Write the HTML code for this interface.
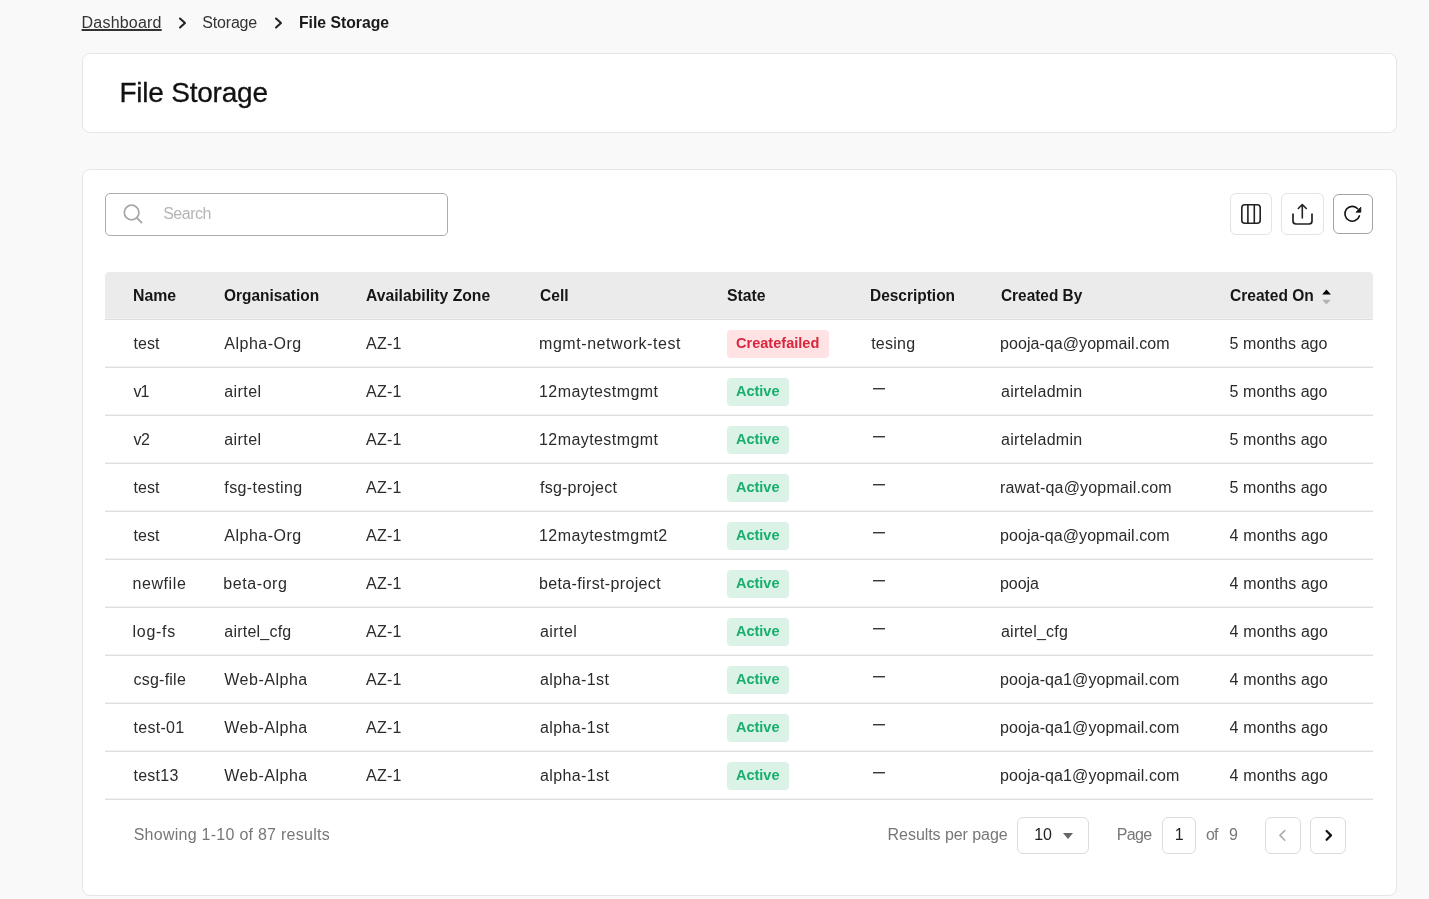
<!DOCTYPE html><html><head><meta charset="utf-8"><style>
*{margin:0;padding:0;box-sizing:border-box}
body{will-change:transform}
html,body{width:1429px;height:899px;overflow:hidden;background:#f9f9f9;font-family:"Liberation Sans",sans-serif;position:relative}
.a{position:absolute;white-space:nowrap}
.t{font-size:16px;line-height:20px;color:#2b2b2b}
.h{font-size:16.5px;line-height:20px;color:#161616;font-weight:bold}
.card{position:absolute;background:#fff;border:1px solid #e6e6e6;border-radius:8px}
.btn{position:absolute;background:#fff;border:1px solid #e3e3e3;border-radius:6px}
.badge{position:absolute;height:27.5px;border-radius:4px}
.bt{font-weight:bold;font-size:15.3px;line-height:20px}
.red{background:#ffe2e3}
.green{background:#dbf2e7}
.line{position:absolute;left:105px;width:1268px;height:1px;background:#dedede;box-shadow:0 -1px 0 #f1f1f1}
.dash{position:absolute;width:12px;height:1px;background:#3a3a3a;box-shadow:0 1px 0 rgba(60,60,60,0.45)}
</style></head><body>
<div class="a t" style="left:81.60px;top:13.00px;letter-spacing:0.203px;color:#333;text-decoration:underline;text-underline-offset:1px;text-decoration-thickness:1.5px">Dashboard</div>
<svg class="a" style="left:177px;top:16px" width="12" height="14" viewBox="0 0 12 14"><path d="M3 2.5 L8 7 L3 11.5" fill="none" stroke="#222" stroke-width="2" stroke-linecap="round" stroke-linejoin="round"/></svg>
<div class="a t" style="left:202.30px;top:13.00px;letter-spacing:-0.190px;color:#333">Storage</div>
<svg class="a" style="left:273px;top:16px" width="12" height="14" viewBox="0 0 12 14"><path d="M3 2.5 L8 7 L3 11.5" fill="none" stroke="#222" stroke-width="2" stroke-linecap="round" stroke-linejoin="round"/></svg>
<div class="a h" style="left:298.75px;top:12.00px;transform:scaleX(0.9543);transform-origin:0 0;color:#1a1a1a">File Storage</div>
<div class="card" style="left:82px;top:53px;width:1315px;height:80px"></div>
<div class="a a" style="left:119.40px;top:77.00px;letter-spacing:-0.218px;font-size:28px;line-height:32px;color:#111;-webkit-text-stroke:0.3px #111">File Storage</div>
<div class="card" style="left:82px;top:169px;width:1315px;height:727px"></div>
<div class="a" style="left:105px;top:193px;width:343px;height:43px;border:1px solid #ababab;border-radius:5px;background:#fff"></div>
<svg class="a" style="left:118px;top:200px" width="28" height="28" viewBox="0 0 28 28"><circle cx="13.6" cy="12.5" r="7.3" fill="none" stroke="#a8a8a8" stroke-width="1.8"/><path d="M19 18 L23.5 22.5" stroke="#a8a8a8" stroke-width="1.8" stroke-linecap="round"/></svg>
<div class="a t" style="left:163.20px;top:204.00px;letter-spacing:-0.499px;color:#b5b5b5">Search</div>
<div class="btn" style="left:1230px;top:193px;width:42px;height:42px"></div>
<svg class="a" style="left:1230px;top:193px" width="43" height="43" viewBox="0 0 43 43"><rect x="11.8" y="11.8" width="18.4" height="18.4" rx="3" fill="none" stroke="#222" stroke-width="1.6"/><path d="M17.9 11.8 V30.2 M24.3 11.8 V30.2" stroke="#222" stroke-width="1.6"/></svg>
<div class="btn" style="left:1281px;top:193px;width:43px;height:42px"></div>
<svg class="a" style="left:1281px;top:193px" width="43" height="43" viewBox="0 0 43 43"><path d="M12 21 V28 Q12 31 15 31 H28 Q31 31 31 28 V21" fill="none" stroke="#222" stroke-width="1.7" stroke-linecap="round"/><path d="M21.3 25 V11.5 M17.3 15.5 L21.3 11.5 L25.3 15.5" fill="none" stroke="#222" stroke-width="1.6" stroke-linecap="round" stroke-linejoin="round"/></svg>
<div class="btn" style="left:1333px;top:194px;width:40px;height:40px;border-color:#a3a3a3"></div>
<svg class="a" style="left:1333px;top:194px" width="40" height="40" viewBox="0 0 40 40"><path d="M24.71 14.70 A7.4 7.4 0 1 0 26.38 21.91" fill="none" stroke="#111" stroke-width="1.6" stroke-linecap="round"/><path d="M27.8 13.2 V18.2 H23 Z" fill="#111" stroke="#111" stroke-width="0.8" stroke-linejoin="round"/></svg>
<div class="a" style="left:105px;top:272px;width:1268px;height:47px;background:#ebebeb;border-radius:4px 4px 0 0"></div>
<div class="line" style="top:319px"></div>
<div class="a h" style="left:132.54px;top:284.50px;transform:scaleX(0.9597);transform-origin:0 0;">Name</div>
<div class="a h" style="left:224.30px;top:284.50px;transform:scaleX(0.9343);transform-origin:0 0;">Organisation</div>
<div class="a h" style="left:366.00px;top:284.50px;transform:scaleX(0.9515);transform-origin:0 0;">Availability Zone</div>
<div class="a h" style="left:540.00px;top:284.50px;transform:scaleX(0.9435);transform-origin:0 0;">Cell</div>
<div class="a h" style="left:727.00px;top:284.50px;transform:scaleX(0.9584);transform-origin:0 0;">State</div>
<div class="a h" style="left:870.26px;top:284.50px;transform:scaleX(0.9366);transform-origin:0 0;">Description</div>
<div class="a h" style="left:1001.00px;top:284.50px;transform:scaleX(0.9325);transform-origin:0 0;">Created By</div>
<div class="a h" style="left:1229.60px;top:284.50px;transform:scaleX(0.9431);transform-origin:0 0;">Created On</div>
<svg class="a" style="left:1320px;top:287px" width="13" height="20" viewBox="0 0 13 20"><path d="M2.2 7.6 L6.4 2.5 L10.9 7.6 Z" fill="#000"/><path d="M2.2 12.8 L6.4 17.6 L10.9 12.8 Z" fill="#b3b3b3"/></svg>
<div class="a t" style="left:133.50px;top:334.00px;letter-spacing:0.019px;">test</div>
<div class="a t" style="left:224.30px;top:334.00px;letter-spacing:0.497px;">Alpha-Org</div>
<div class="a t" style="left:366.00px;top:334.00px;letter-spacing:0.242px;">AZ-1</div>
<div class="a t" style="left:539.00px;top:334.00px;letter-spacing:0.561px;">mgmt-network-test</div>
<div class="badge red" style="left:727px;top:330px;width:102.2px"></div>
<div class="a bt a" style="left:736.30px;top:332.50px;transform:scaleX(0.9516);transform-origin:0 0;color:#d7263d">Createfailed</div>
<div class="a t" style="left:871.20px;top:334.00px;letter-spacing:0.241px;">tesing</div>
<div class="a t" style="left:1000.00px;top:334.00px;letter-spacing:0.064px;">pooja-qa@yopmail.com</div>
<div class="a t" style="left:1229.60px;top:334.00px;letter-spacing:0.086px;">5 months ago</div>
<div class="line" style="top:367px"></div>
<div class="a t" style="left:133.50px;top:382.00px;letter-spacing:-1.000px;">v1</div>
<div class="a t" style="left:224.30px;top:382.00px;letter-spacing:0.415px;">airtel</div>
<div class="a t" style="left:366.00px;top:382.00px;letter-spacing:0.242px;">AZ-1</div>
<div class="a t" style="left:539.00px;top:382.00px;letter-spacing:0.428px;">12maytestmgmt</div>
<div class="badge green" style="left:727px;top:378px;width:62.0px"></div>
<div class="a bt a" style="left:736.30px;top:380.50px;transform:scaleX(0.9470);transform-origin:0 0;color:#1aad6f">Active</div>
<div class="dash" style="left:873px;top:388px"></div>
<div class="a t" style="left:1001.00px;top:382.00px;letter-spacing:0.294px;">airteladmin</div>
<div class="a t" style="left:1229.60px;top:382.00px;letter-spacing:0.086px;">5 months ago</div>
<div class="line" style="top:415px"></div>
<div class="a t" style="left:133.50px;top:430.00px;letter-spacing:-0.500px;">v2</div>
<div class="a t" style="left:224.30px;top:430.00px;letter-spacing:0.415px;">airtel</div>
<div class="a t" style="left:366.00px;top:430.00px;letter-spacing:0.242px;">AZ-1</div>
<div class="a t" style="left:539.00px;top:430.00px;letter-spacing:0.428px;">12maytestmgmt</div>
<div class="badge green" style="left:727px;top:426px;width:62.0px"></div>
<div class="a bt a" style="left:736.30px;top:428.50px;transform:scaleX(0.9470);transform-origin:0 0;color:#1aad6f">Active</div>
<div class="dash" style="left:873px;top:436px"></div>
<div class="a t" style="left:1001.00px;top:430.00px;letter-spacing:0.294px;">airteladmin</div>
<div class="a t" style="left:1229.60px;top:430.00px;letter-spacing:0.086px;">5 months ago</div>
<div class="line" style="top:463px"></div>
<div class="a t" style="left:133.50px;top:478.00px;letter-spacing:0.019px;">test</div>
<div class="a t" style="left:224.30px;top:478.00px;letter-spacing:0.409px;">fsg-testing</div>
<div class="a t" style="left:366.00px;top:478.00px;letter-spacing:0.242px;">AZ-1</div>
<div class="a t" style="left:540.00px;top:478.00px;letter-spacing:0.215px;">fsg-project</div>
<div class="badge green" style="left:727px;top:474px;width:62.0px"></div>
<div class="a bt a" style="left:736.30px;top:476.50px;transform:scaleX(0.9470);transform-origin:0 0;color:#1aad6f">Active</div>
<div class="dash" style="left:873px;top:484px"></div>
<div class="a t" style="left:1000.00px;top:478.00px;letter-spacing:0.175px;">rawat-qa@yopmail.com</div>
<div class="a t" style="left:1229.60px;top:478.00px;letter-spacing:0.086px;">5 months ago</div>
<div class="line" style="top:511px"></div>
<div class="a t" style="left:133.50px;top:526.00px;letter-spacing:0.019px;">test</div>
<div class="a t" style="left:224.30px;top:526.00px;letter-spacing:0.497px;">Alpha-Org</div>
<div class="a t" style="left:366.00px;top:526.00px;letter-spacing:0.242px;">AZ-1</div>
<div class="a t" style="left:539.00px;top:526.00px;letter-spacing:0.422px;">12maytestmgmt2</div>
<div class="badge green" style="left:727px;top:522px;width:62.0px"></div>
<div class="a bt a" style="left:736.30px;top:524.50px;transform:scaleX(0.9470);transform-origin:0 0;color:#1aad6f">Active</div>
<div class="dash" style="left:873px;top:532px"></div>
<div class="a t" style="left:1000.00px;top:526.00px;letter-spacing:0.064px;">pooja-qa@yopmail.com</div>
<div class="a t" style="left:1229.60px;top:526.00px;letter-spacing:0.131px;">4 months ago</div>
<div class="line" style="top:559px"></div>
<div class="a t" style="left:132.50px;top:574.00px;letter-spacing:0.582px;">newfile</div>
<div class="a t" style="left:223.30px;top:574.00px;letter-spacing:0.572px;">beta-org</div>
<div class="a t" style="left:366.00px;top:574.00px;letter-spacing:0.242px;">AZ-1</div>
<div class="a t" style="left:539.00px;top:574.00px;letter-spacing:0.356px;">beta-first-project</div>
<div class="badge green" style="left:727px;top:570px;width:62.0px"></div>
<div class="a bt a" style="left:736.30px;top:572.50px;transform:scaleX(0.9470);transform-origin:0 0;color:#1aad6f">Active</div>
<div class="dash" style="left:873px;top:580px"></div>
<div class="a t" style="left:1000.00px;top:574.00px;letter-spacing:-0.037px;">pooja</div>
<div class="a t" style="left:1229.60px;top:574.00px;letter-spacing:0.131px;">4 months ago</div>
<div class="line" style="top:607px"></div>
<div class="a t" style="left:132.50px;top:622.00px;letter-spacing:0.715px;">log-fs</div>
<div class="a t" style="left:224.30px;top:622.00px;letter-spacing:0.220px;">airtel_cfg</div>
<div class="a t" style="left:366.00px;top:622.00px;letter-spacing:0.242px;">AZ-1</div>
<div class="a t" style="left:540.00px;top:622.00px;letter-spacing:0.415px;">airtel</div>
<div class="badge green" style="left:727px;top:618px;width:62.0px"></div>
<div class="a bt a" style="left:736.30px;top:620.50px;transform:scaleX(0.9470);transform-origin:0 0;color:#1aad6f">Active</div>
<div class="dash" style="left:873px;top:628px"></div>
<div class="a t" style="left:1001.00px;top:622.00px;letter-spacing:0.220px;">airtel_cfg</div>
<div class="a t" style="left:1229.60px;top:622.00px;letter-spacing:0.131px;">4 months ago</div>
<div class="line" style="top:655px"></div>
<div class="a t" style="left:133.50px;top:670.00px;letter-spacing:0.231px;">csg-file</div>
<div class="a t" style="left:224.30px;top:670.00px;letter-spacing:0.505px;">Web-Alpha</div>
<div class="a t" style="left:366.00px;top:670.00px;letter-spacing:0.242px;">AZ-1</div>
<div class="a t" style="left:540.00px;top:670.00px;letter-spacing:0.378px;">alpha-1st</div>
<div class="badge green" style="left:727px;top:666px;width:62.0px"></div>
<div class="a bt a" style="left:736.30px;top:668.50px;transform:scaleX(0.9470);transform-origin:0 0;color:#1aad6f">Active</div>
<div class="dash" style="left:873px;top:676px"></div>
<div class="a t" style="left:1000.00px;top:670.00px;letter-spacing:0.105px;">pooja-qa1@yopmail.com</div>
<div class="a t" style="left:1229.60px;top:670.00px;letter-spacing:0.131px;">4 months ago</div>
<div class="line" style="top:703px"></div>
<div class="a t" style="left:133.50px;top:718.00px;letter-spacing:0.297px;">test-01</div>
<div class="a t" style="left:224.30px;top:718.00px;letter-spacing:0.505px;">Web-Alpha</div>
<div class="a t" style="left:366.00px;top:718.00px;letter-spacing:0.242px;">AZ-1</div>
<div class="a t" style="left:540.00px;top:718.00px;letter-spacing:0.378px;">alpha-1st</div>
<div class="badge green" style="left:727px;top:714px;width:62.0px"></div>
<div class="a bt a" style="left:736.30px;top:716.50px;transform:scaleX(0.9470);transform-origin:0 0;color:#1aad6f">Active</div>
<div class="dash" style="left:873px;top:724px"></div>
<div class="a t" style="left:1000.00px;top:718.00px;letter-spacing:0.105px;">pooja-qa1@yopmail.com</div>
<div class="a t" style="left:1229.60px;top:718.00px;letter-spacing:0.131px;">4 months ago</div>
<div class="line" style="top:751px"></div>
<div class="a t" style="left:133.50px;top:766.00px;letter-spacing:0.242px;">test13</div>
<div class="a t" style="left:224.30px;top:766.00px;letter-spacing:0.505px;">Web-Alpha</div>
<div class="a t" style="left:366.00px;top:766.00px;letter-spacing:0.242px;">AZ-1</div>
<div class="a t" style="left:540.00px;top:766.00px;letter-spacing:0.378px;">alpha-1st</div>
<div class="badge green" style="left:727px;top:762px;width:62.0px"></div>
<div class="a bt a" style="left:736.30px;top:764.50px;transform:scaleX(0.9470);transform-origin:0 0;color:#1aad6f">Active</div>
<div class="dash" style="left:873px;top:772px"></div>
<div class="a t" style="left:1000.00px;top:766.00px;letter-spacing:0.105px;">pooja-qa1@yopmail.com</div>
<div class="a t" style="left:1229.60px;top:766.00px;letter-spacing:0.131px;">4 months ago</div>
<div class="line" style="top:799px"></div>
<div class="a t" style="left:133.70px;top:825.00px;letter-spacing:0.262px;color:#777">Showing 1-10 of 87 results</div>
<div class="a t" style="left:887.60px;top:825.00px;letter-spacing:-0.057px;color:#777">Results per page</div>
<div class="btn" style="left:1017px;top:817px;width:72px;height:36.5px;border-color:#dcdcdc"></div>
<div class="a t" style="left:1034.30px;top:825.00px;letter-spacing:-0.198px;color:#222">10</div>
<svg class="a" style="left:1062px;top:832px" width="12" height="8" viewBox="0 0 12 8"><path d="M1 1 L11 1 L6 7 Z" fill="#666"/></svg>
<div class="a t" style="left:1116.80px;top:825.00px;letter-spacing:-0.690px;color:#777">Page</div>
<div class="btn" style="left:1162px;top:817px;width:34px;height:36.5px;border-color:#dcdcdc"></div>
<div class="a t" style="left:1174.70px;top:825.00px;letter-spacing:0.000px;color:#222">1</div>
<div class="a t" style="left:1205.90px;top:825.00px;letter-spacing:-0.798px;color:#777">of</div>
<div class="a t" style="left:1228.90px;top:825.00px;letter-spacing:0.000px;color:#777">9</div>
<div class="btn" style="left:1265px;top:817px;width:36px;height:36.5px;border-color:#dcdcdc"></div>
<svg class="a" style="left:1265px;top:817px" width="36" height="37" viewBox="0 0 36 37"><path d="M19.8 13.6 L14.9 18.4 L19.8 23.2" fill="none" stroke="#aaa" stroke-width="1.5" stroke-linecap="round" stroke-linejoin="round"/></svg>
<div class="btn" style="left:1310px;top:817px;width:36px;height:36.5px;border-color:#dcdcdc"></div>
<svg class="a" style="left:1310px;top:817px" width="36" height="37" viewBox="0 0 36 37"><path d="M16.6 14 L21 18.4 L16.6 22.8" fill="none" stroke="#111" stroke-width="2.2" stroke-linecap="round" stroke-linejoin="round"/></svg>
</body></html>
